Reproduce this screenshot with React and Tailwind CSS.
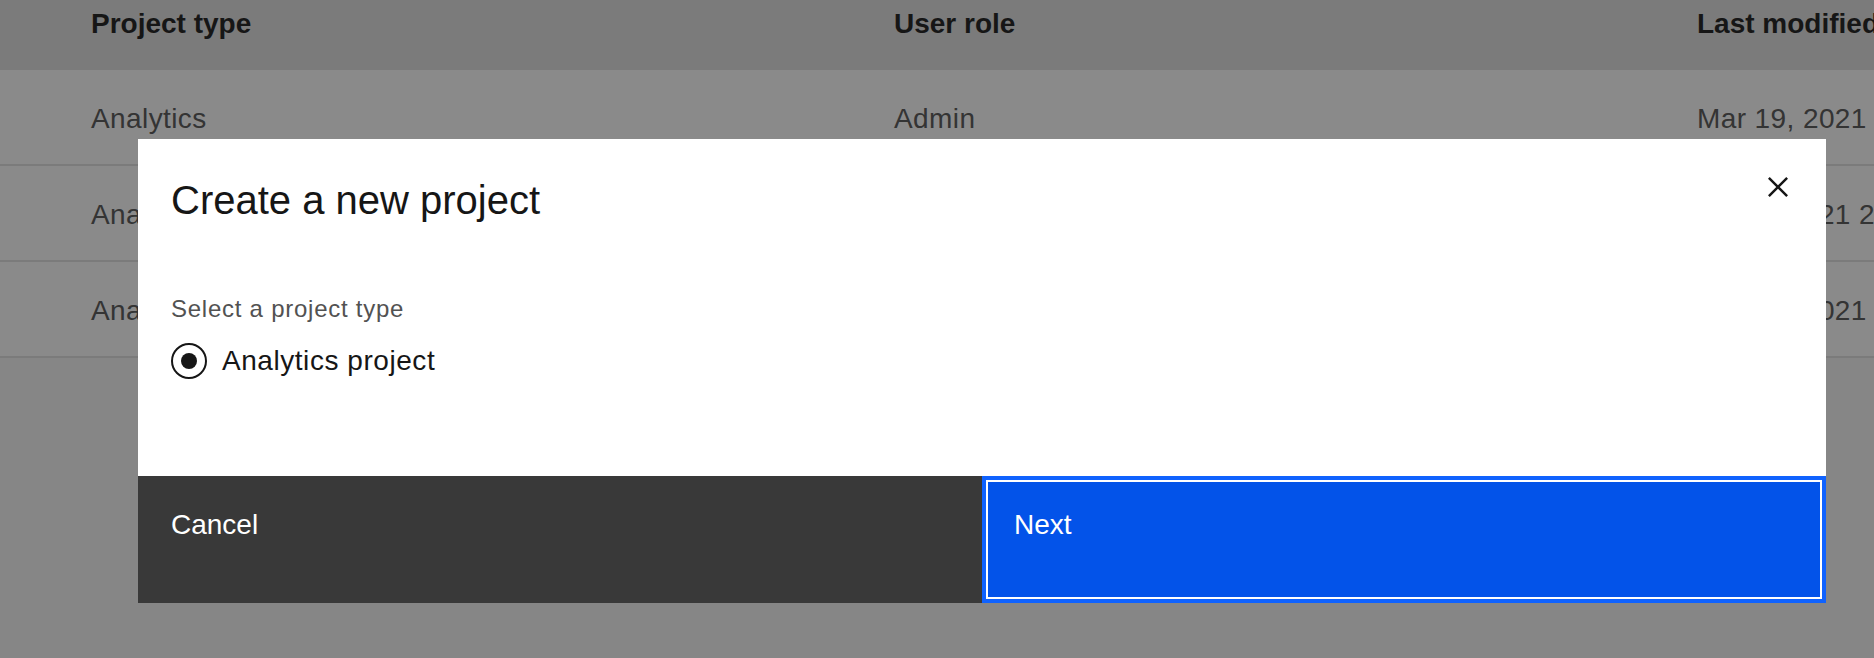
import { useState } from "react";

const rows = [
  { type: "Analytics", role: "Admin", modified: "Mar 19, 2021" },
  { type: "Analytics", role: "Admin", modified: "Mar 1, 2021 2:38 PM" },
  { type: "Analytics", role: "Admin", modified: "Mar 17, 2021" },
];

function CloseIcon() {
  return (
    <svg width="40" height="40" viewBox="0 0 32 32" fill="#161616">
      <path d="M24 9.4L22.6 8 16 14.6 9.4 8 8 9.4 14.6 16 8 22.6 9.4 24 16 17.4 22.6 24 24 22.6 17.4 16 24 9.4z" />
    </svg>
  );
}

function ProjectTable() {
  return (
    <div className="w-full">
      <div className="grid h-[70px] grid-cols-[803px_803px_1fr] bg-[#e0e0e0] pl-[91px] pt-[6px] text-[28px] font-bold leading-[36px] text-[#161616]">
        <div>Project type</div>
        <div>User role</div>
        <div className="whitespace-nowrap">Last modified</div>
      </div>
      {rows.map((r, i) => (
        <div
          key={i}
          className="grid h-[96px] grid-cols-[803px_803px_1fr] border-b-2 border-[#e0e0e0] bg-white pl-[91px] pt-[31px] text-[28px] leading-[36px] tracking-[0.4px] text-[#525252]"
        >
          <div>{r.type}</div>
          <div>{r.role}</div>
          <div className="whitespace-nowrap">{r.modified}</div>
        </div>
      ))}
    </div>
  );
}

function CreateProjectModal() {
  const [type, setType] = useState("analytics");

  return (
    <div className="flex h-[464px] w-full flex-col bg-white">
      <div className="flex items-start justify-between">
        <h2 className="pl-[33px] pt-[33px] text-[40px] font-normal leading-[56px] text-[#161616]">
          Create a new project
        </h2>
        <button className="flex h-[96px] w-[96px] items-center justify-center">
          <CloseIcon />
        </button>
      </div>

      <div className="flex-1 pl-[33px] pt-[58px]">
        <div className="text-[24px] leading-[32px] tracking-[0.75px] text-[#525252]">
          Select a project type
        </div>
        <label
          className="mt-[18px] flex h-[36px] cursor-pointer items-center gap-[15px]"
          onClick={() => setType("analytics")}
        >
          <span className="flex h-[36px] w-[36px] items-center justify-center rounded-full border-2 border-[#161616]">
            {type === "analytics" && (
              <span className="h-[16px] w-[16px] rounded-full bg-[#161616]" />
            )}
          </span>
          <span className="text-[28px] leading-[36px] tracking-[0.55px] text-[#161616]">
            Analytics project
          </span>
        </label>
      </div>

      <div className="grid h-[127px] grid-cols-2">
        <button className="flex items-start bg-[#393939] pl-[33px] pt-[31px] text-left text-[28px] leading-[36px] text-white">
          Cancel
        </button>
        <button className="flex items-start border-4 border-[#0f62fe] bg-[#0353e9] pl-[28px] pt-[27px] text-left text-[28px] leading-[36px] text-white shadow-[inset_0_0_0_2px_#ffffff]">
          Next
        </button>
      </div>
    </div>
  );
}

export default function App() {
  return (
    <div
      className="relative h-[658px] w-full overflow-hidden bg-[#f6f6f6]"
      style={{ fontFamily: '"Liberation Sans", Arial, sans-serif' }}
    >
      <ProjectTable />
      <div className="absolute inset-0 bg-[#161616]/50 pl-[138px] pr-[48px] pt-[139px]">
        <CreateProjectModal />
      </div>
    </div>
  );
}
